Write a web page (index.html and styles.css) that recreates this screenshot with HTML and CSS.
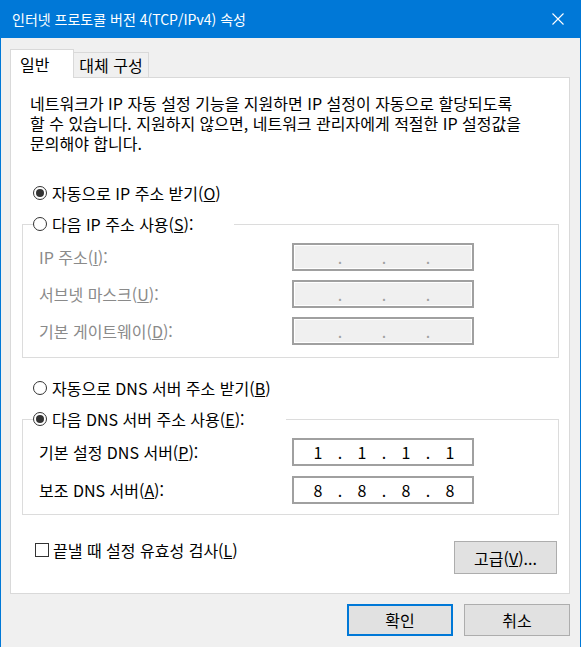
FILE: index.html
```html
<!DOCTYPE html>
<html lang="ko">
<head>
    <meta charset="UTF-8">
    <meta name="viewport" content="width=device-width, initial-scale=1.0">
    <title>인터넷 프로토콜 버전 4(TCP/IPv4) 속성</title>
    <link rel="stylesheet" href="styles.css">
</head>
<body>
    <div class="window">
        <div class="titlebar">
            <span class="title">인터넷 프로토콜 버전 4(TCP/IPv4) 속성</span>
            <svg class="close" width="12" height="12" viewBox="0 0 12 12">
                <path d="M0.5 0.5 L11.5 11.5 M11.5 0.5 L0.5 11.5" stroke="#fff" stroke-width="1.1" fill="none"/>
            </svg>
        </div>
        <div class="content">
            <div class="tabs">
                <div class="tab tab-active">일반</div>
                <div class="tab tab-idle">대체 구성</div>
            </div>
            <div class="panel">
                <p class="intro">네트워크가 IP 자동 설정 기능을 지원하면 IP 설정이 자동으로 할당되도록<br>할 수 있습니다. 지원하지 않으면, 네트워크 관리자에게 적절한 IP 설정값을<br>문의해야 합니다.</p>

                <div class="radio radio-line"><span class="mark on"></span>자동으로 IP 주소 받기(<u>O</u>)</div>

                <fieldset class="group group-ip">
                    <legend><span class="radio"><span class="mark"></span>다음 IP 주소 사용(<u>S</u>):</span></legend>
                    <div class="fields">
                        <span class="lbl dim">IP 주소(<u>I</u>):</span>
                        <div class="ip dim"><span class="seg"></span><span class="sep">.</span><span class="seg"></span><span class="sep">.</span><span class="seg"></span><span class="sep">.</span><span class="seg"></span></div>
                        <span class="lbl dim">서브넷 마스크(<u>U</u>):</span>
                        <div class="ip dim"><span class="seg"></span><span class="sep">.</span><span class="seg"></span><span class="sep">.</span><span class="seg"></span><span class="sep">.</span><span class="seg"></span></div>
                        <span class="lbl dim">기본 게이트웨이(<u>D</u>):</span>
                        <div class="ip dim"><span class="seg"></span><span class="sep">.</span><span class="seg"></span><span class="sep">.</span><span class="seg"></span><span class="sep">.</span><span class="seg"></span></div>
                    </div>
                </fieldset>

                <div class="radio radio-dns"><span class="mark"></span>자동으로 DNS 서버 주소 받기(<u>B</u>)</div>

                <fieldset class="group group-dns">
                    <legend><span class="radio"><span class="mark on"></span>다음 DNS 서버 주소 사용(<u>E</u>):</span></legend>
                    <div class="fields">
                        <span class="lbl">기본 설정 DNS 서버(<u>P</u>):</span>
                        <div class="ip"><span class="seg">1</span><span class="sep">.</span><span class="seg">1</span><span class="sep">.</span><span class="seg">1</span><span class="sep">.</span><span class="seg">1</span></div>
                        <span class="lbl">보조 DNS 서버(<u>A</u>):</span>
                        <div class="ip"><span class="seg">8</span><span class="sep">.</span><span class="seg">8</span><span class="sep">.</span><span class="seg">8</span><span class="sep">.</span><span class="seg">8</span></div>
                    </div>
                </fieldset>

                <div class="options">
                    <div class="check"><span class="box"></span>끝낼 때 설정 유효성 검사(<u>L</u>)</div>
                    <button class="btn btn-adv">고급(<u>V</u>)...</button>
                </div>
            </div>
            <div class="footer">
                <button class="btn btn-ok">확인</button>
                <button class="btn btn-cancel">취소</button>
            </div>
        </div>
    </div>
</body>
</html>
```
FILE: styles.css
```css
body {
    margin: 0;
    background-color: #f0f0f0;
    font-family: "Noto Sans CJK KR", "Noto Sans", sans-serif;
    font-size: 16px;
    color: #000;
}

.window {
    width: 581px;
    height: 647px;
    box-sizing: border-box;
    border-left: 1px solid #0078d7;
    border-right: 1px solid #0078d7;
    background-color: #f0f0f0;
    overflow: hidden;
}

.titlebar {
    height: 38px;
    background-color: #0078d7;
    color: #fff;
    display: flex;
    align-items: center;
    justify-content: space-between;
    padding: 0 16px 0 11px;
}

.title {
    font-size: 14px;
    line-height: 20px;
}

.content {
    padding: 11px 10px 0 9px;
}

/* tabs */
.tabs {
    display: flex;
    align-items: flex-end;
}

.tab {
    box-sizing: border-box;
    border: 1px solid #d9d9d9;
    border-bottom: 0;
    line-height: 20px;
    display: flex;
    align-items: center;
}

.tab-active {
    width: 64px;
    height: 29px;
    margin-bottom: -1px;
    padding-left: 9px;
    background-color: #fff;
    position: relative;
    z-index: 1;
}

.tab-idle {
    width: 76px;
    height: 25px;
    margin-left: -1px;
    justify-content: center;
    background-color: #f0f0f0;
}

.panel {
    box-sizing: border-box;
    height: 517px;
    background-color: #fff;
    border: 1px solid #d9d9d9;
}

.intro {
    margin: 15px 0 0 19px;
    line-height: 20px;
}

/* radios */
.radio {
    display: flex;
    align-items: center;
    line-height: 20px;
}

.radio-line {
    margin: 30px 0 0 22px;
}

.radio-dns {
    margin: 20px 0 0 22px;
}

.mark {
    width: 14px;
    height: 14px;
    box-sizing: border-box;
    border: 1px solid #333;
    border-radius: 50%;
    margin-right: 5px;
    background-color: #fff;
    display: flex;
    align-items: center;
    justify-content: center;
}

.mark.on::after {
    content: "";
    width: 8px;
    height: 8px;
    border-radius: 50%;
    background-color: #333;
}

/* group boxes */
.group {
    margin: 11px 10px 0 11px;
    border: 1px solid #dcdcdc;
    padding: 9px 0 12px 10px;
    min-width: 0;
}

.group-dns {
    padding-bottom: 10px;
}

.group legend {
    padding: 0 41px 0 0;
    line-height: 20px;
}

.fields {
    display: grid;
    grid-template-columns: 253px 182px;
    row-gap: 9px;
    align-items: center;
    padding-left: 6px;
}

.group-dns .fields {
    row-gap: 10px;
}

.lbl {
    line-height: 20px;
}

.lbl.dim {
    color: #8a8a8a;
}

.ip {
    box-sizing: border-box;
    height: 28px;
    border: 2px solid #a0a0a0;
    padding-left: 2px;
    background-color: #fff;
    display: flex;
    align-items: center;
    line-height: 20px;
}

.ip.dim {
    background-color: #f0f0f0;
    box-shadow: inset 0 0 0 1px #fff;
    color: #a0a0a0;
}

.seg {
    width: 44px;
    text-align: center;
}

.sep {
    width: 0;
    display: flex;
    justify-content: center;
}

/* bottom row */
.options {
    display: flex;
    justify-content: space-between;
    align-items: flex-start;
    margin-top: 25px;
    padding: 0 12px 0 24px;
}

.check {
    display: flex;
    align-items: center;
    line-height: 20px;
}

.box {
    width: 14px;
    height: 14px;
    box-sizing: border-box;
    border: 1px solid #333;
    margin-right: 4px;
    background-color: #fff;
}

.btn {
    box-sizing: border-box;
    background-color: #e1e1e1;
    border: 1px solid #adadad;
    font: inherit;
    color: #000;
    padding: 0;
    display: flex;
    align-items: center;
    justify-content: center;
}

.btn-adv {
    width: 103px;
    height: 33px;
    margin-top: 1px;
}

.footer {
    display: flex;
    justify-content: flex-end;
    gap: 11px;
    padding-top: 10px;
}

.btn-ok,
.btn-cancel {
    width: 106px;
    height: 32px;
}

.btn-ok {
    border: 2px solid #0078d7;
}
```
